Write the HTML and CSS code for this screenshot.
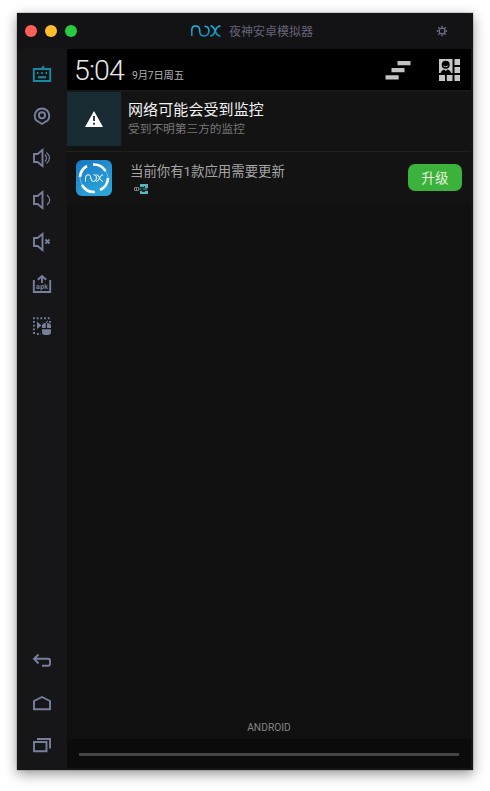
FILE: index.html
```html
<!DOCTYPE html>
<html lang="zh-CN">
<head>
<meta charset="utf-8">
<title>夜神安卓模拟器</title>
<link rel="stylesheet" href="styles.css">
</head>
<body>
<main class="window">
  <header class="titlebar">
    <div class="lights"><i class="red"></i><i class="yellow"></i><i class="green"></i></div>
    <svg class="logo" width="30" height="12" viewBox="0 0 30 12">
      <defs><linearGradient id="cyan" x2="0" y2="1"><stop stop-color="#18bce8"/><stop offset="1" stop-color="#108cb2"/></linearGradient></defs>
      <g fill="none" stroke="url(#cyan)" stroke-width="1.6">
        <path d="M.8 11V5Q.8 1 4.600 1T8.700 5V6.500Q9 11 13.200 11T18 6Q18 1.500 13.500 1.300"/>
        <path d="M19.500 1Q22.500 1 24.200 6T29.500 11M29.500 1Q26 1 24.200 6T19 11"/>
      </g>
    </svg>
    <span class="title">夜神安卓模拟器</span>
    <svg class="gear" width="12" height="12" viewBox="0 0 12 12" fill="none" stroke="#737489"><circle cx="6" cy="6" r="2.900" stroke-width="1.200"/><path stroke-width="1.400" d="M6 .8V2.500M6 9.500V11.200M.8 6H2.500M9.500 6H11.200M2.300 2.300L3.500 3.500M8.500 8.500L9.700 9.700M9.700 2.300L8.500 3.500M3.500 8.500L2.300 9.700"/></svg>
  </header>
  <div class="body">
    <nav class="sidebar">
      <div class="tools">
        <svg class="active" viewBox="0 0 20 20"><path d="M1.800 5H18.200V17H1.800ZM9.500 5L12 2.200M5 9H6.500M9.200 9H10.800M13.500 9H15M6 13.200H14"/></svg>
        <svg viewBox="0 0 20 20"><path d="M10 18L4.500 14.600A7.300 7.300 0 1 1 15.500 14.600Z"/><circle cx="10" cy="9.300" r="3.100"/></svg>
        <svg viewBox="0 0 20 20"><path d="M2 6H5.500L10.500 2V18L5.500 14H2Z"/><path d="M13 6.500Q16 10 13 13.500M14.500 4.500Q20.500 10 14.500 15.500" stroke-width="1.200"/></svg>
        <svg viewBox="0 0 20 20"><path d="M2 6H5.500L10.500 2V18L5.500 14H2Z"/><path d="M15 5Q20.500 10 15 15" stroke-width="1.200"/></svg>
        <svg viewBox="0 0 20 20"><path d="M2 6H5.500L10.500 2V18L5.500 14H2ZM13.500 7.500L17.500 11.500M17.500 7.500L13.500 11.500"/></svg>
        <svg viewBox="0 0 20 20"><path d="M1.800 6V18H18.200V6M10 9V2M5.800 5.800L10 2L14.200 5.800"/><text x="3.700" y="14.800">apk</text></svg>
        <svg viewBox="0 0 20 20"><path d="M1 2.200H19M2 5V19M5 18H9M18 5V7" stroke-dasharray="1.800 1.900"/><path d="M5 5.500L9.500 9.500L5 13Z" fill="#777f9b" stroke="none"/><path d="M10 12V10Q10 7 13.800 7V12ZM15 7Q19 7 19 10V12H15ZM10 13.200H19V16Q19 19 16 19H13Q10 19 10 16Z" fill="#777f9b" stroke="none"/><path d="M14.400 7Q14.400 5 16 5" stroke-width="1"/></svg>
      </div>
      <div class="tools">
        <svg viewBox="0 0 20 20"><path d="M6.500 3.500L2 7.700L6.500 12.500M2 7.700H16Q18 7.700 18 10V12.500Q18 14.800 16 14.800H10"/></svg>
        <svg viewBox="0 0 20 20"><path d="M2 8L10 4L18 8V16.200H2Z"/></svg>
        <svg viewBox="0 0 20 20"><path d="M2 7H14.500V16.200H2ZM5 4H18V13.500"/></svg>
      </div>
    </nav>
    <section class="screen">
      <div class="status">
        <span class="time">5:04</span><span class="date">9月7日周五</span>
        <svg class="clear" width="26" height="20" viewBox="0 0 26 20" fill="#c3c3c3"><path d="M12.500 1H25.500V5.200H12.500ZM6.500 8H19.500V12.200H6.500ZM.5 15.200H13.700V19.500H.5Z"/></svg>
        <svg class="quick" width="21" height="22" viewBox="0 0 21 22"><path fill="#c6c6c6" d="M0 0H13.500V14H0ZM15.500 0H21V6H15.500ZM15.500 8H21V14H15.500ZM0 16H6V22H0ZM7.800 16H13.500V22H7.800ZM15.500 16H21V22H15.500Z"/><circle cx="6.700" cy="5.700" r="4"/><path d="M1.500 14Q2.500 11 5 10.500L6.800 12L8.500 10.500Q11.500 11 12 14Z"/><path d="M4.300 7Q6.700 8.500 9.100 7" fill="none" stroke="#c6c6c6" stroke-width=".8"/></svg>
      </div>
      <article class="notice first">
        <div class="warning"><svg width="18" height="16" viewBox="0 0 18 16"><path fill="#fff" d="M9 0L18 16H0Z"/><path d="M9 5V10M9 11.800V13.700" stroke="#182b33" stroke-width="1.800"/></svg></div>
        <div class="copy"><h1>网络可能会受到监控</h1><p>受到不明第三方的监控</p></div>
      </article>
      <article class="notice second">
        <svg class="app" width="36" height="36" viewBox="0 0 36 36">
          <defs><linearGradient id="blue" x2=".6" y2="1"><stop stop-color="#1878c5"/><stop offset="1" stop-color="#2aa5d9"/></linearGradient></defs>
          <rect width="36" height="36" rx="6" fill="url(#blue)"/>
          <g fill="none" stroke="#fff"><path d="M17 4.500A14 14 0 0 1 29.500 11M32 18A14 14 0 0 1 24 30M19 32A14 14 0 0 1 6 25M4 17A14 14 0 0 1 11 6" stroke-width="2.600"/><path d="M29.500 11Q32 14 32 18M6 25Q4 21 4 17" stroke-width="1" opacity=".35"/><path d="M9.500 21.500V18Q9.500 14.700 12 14.700T14.800 17V18Q15 21.500 17.500 21.500T20.500 18T17.500 14.700M20.500 14.700Q22.500 15 23.500 18T27 21.500M27 14.700Q24.500 15 23.500 18T20 21.500" stroke-width="1"/></g>
        </svg>
        <div class="copy"><h2>当前你有1款应用需要更新</h2>
          <svg class="mini" width="16" height="11" viewBox="0 0 16 11"><path fill="#56b4bd" d="M6 0H14V10H6Z"/><path fill="#192f32" d="M6 3H10V2H11V4H14V7H11V8H8V7H6Z"/><path fill="none" stroke="#8a9999" stroke-width=".8" d="M.5 6.500V3.500H2.500V6.500M2.500 3.500H4.500V6.500H.5M5 5H7M9 5H13"/></svg>
        </div>
        <button class="upgrade">升级</button>
      </article>
      <div class="space"></div>
      <div class="carrier">ANDROID</div>
      <footer><i></i></footer>
    </section>
  </div>
</main>
</body>
</html>
```
FILE: styles.css
```css
* { box-sizing: border-box; }
body { margin: 0; padding: 13px 17px 21px; background: #fff; font-family: Roboto, "Noto Sans CJK SC", sans-serif; }
.window { width: 456px; height: 757px; background: #151517; display: flex; flex-direction: column; box-shadow: 0 0 1px #444, 0 4px 12px rgba(0,0,0,.42); }
.titlebar { height: 36px; flex: none; display: flex; align-items: center; background: #131315; }
.lights { display: flex; gap: 8px; margin-left: 8px; }
.lights i { width: 12px; height: 12px; border-radius: 50%; }
.red { background: #ff5f57; }
.yellow { background: #ffbd2e; }
.green { background: #28ca42; }
.logo { margin-left: 114px; }
.title { margin-left: 8px; width: 86px; font: 12px/18px "Noto Sans CJK SC", sans-serif; color: #646477; white-space: nowrap; }
.gear { margin-left: 121px; }
.body { height: 721px; display: flex; }
.sidebar { width: 50px; background: #161618; display: flex; flex-direction: column; justify-content: space-between; padding: 15px 15px 15px; }
.tools { display: flex; flex-direction: column; gap: 22px; }
.tools svg { width: 20px; height: 20px; fill: none; stroke: #777f9b; stroke-width: 1.9; }
.tools .active { stroke: #168aa4; }
.tools text { font: bold 7px "DejaVu Sans Mono", monospace; fill: #777f9b; stroke: none; }
.screen { width: 404px; height: 719px; background: #101010; display: flex; flex-direction: column; }
.status { height: 41px; flex: none; background: #000; display: flex; padding: 0 10px 0 7px; }
.time { width: 52px; margin-top: 5px; color: #e7e7e7; font-size: 28.5px; line-height: 34px; font-weight: 300; letter-spacing: -.9px; }
.date { margin: 19px 0 0 6px; width: 54px; color: #b2b2b2; font-size: 10.3px; line-height: 16px; letter-spacing: -.15px; white-space: nowrap; }
.clear { margin: 11px 0 0 199px; }
.quick { margin: 10px 1px 0 auto; }
.notice { flex: none; display: flex; background: #131313; }
.first { height: 61px; border-top: 2px solid #181818; }
.warning { width: 54px; height: 54px; background: #182b33; display: grid; place-items: center; }
.copy { display: flex; flex-direction: column; }
.first .copy { margin-left: 7px; }
h1, h2, p { margin: 0; font-weight: 400; white-space: nowrap; }
h1 { margin-top: 7px; color: #f2f2f2; font-size: 15px; line-height: 22px; letter-spacing: .1px; }
p { color: #777; font-size: 11.7px; line-height: 17px; }
.second { height: 54px; border-top: 1px solid #202020; padding: 8px 9px 0; border-bottom: 1px solid #141010; }
.second .copy { margin-left: 18px; }
h2 { margin-top: 1px; color: #a6a6a6; font-size: 13.4px; line-height: 21px; }
.mini { margin: 2px 0 0 4px; }
.upgrade { margin: 4px 0 0 auto; width: 54px; height: 27px; border: 0; border-radius: 7px; background: #3bb23b; color: #e7f4df; font: 13.5px/25px "Noto Sans CJK SC", sans-serif; padding: 0 0 1px; }
.space { flex: 1; }
.carrier { height: 19px; color: #858585; font-size: 10.2px; line-height: 16px; text-align: center; letter-spacing: .05px; }
footer { height: 29px; flex: none; background: #0b0b0b; padding: 14px 12px 0; }
footer i { display: block; height: 3px; background: #444; }
```
